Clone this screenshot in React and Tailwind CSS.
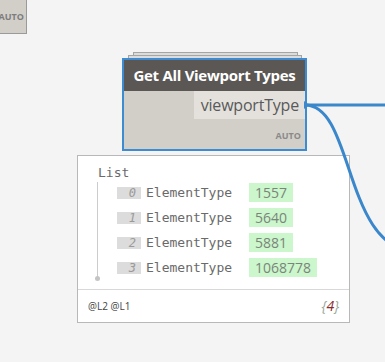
import React from "react";

const rows = [
  { i: "0", v: "1557" },
  { i: "1", v: "5640" },
  { i: "2", v: "5881" },
  { i: "3", v: "1068778" },
];

export default function App() {
  const sans = { fontFamily: '"Open Sans", "Noto Sans", sans-serif' };
  const mono = { fontFamily: '"DejaVu Sans Mono", "Liberation Mono", monospace' };
  return (
    <div className="relative w-[385px] h-[362px] overflow-hidden bg-[#f4f4f4]" style={sans}>
      {/* corner node fragment */}
      <div className="absolute left-[-10px] top-[-10px] w-[37px] h-[44px] bg-[#d2cfc9] border border-[#9a9a9a] flex items-end justify-end pb-[12px] pr-[2px]">
        <span className="text-[9px] font-bold text-[#7d7d7d] leading-none">AUTO</span>
      </div>

      {/* ghost stacked cards */}
      <div className="absolute left-[133px] top-[52px] w-[165px] h-[20px] bg-[#dcdcdc] border border-[#a5a5a5]" />
      <div className="absolute left-[128px] top-[55px] w-[174px] h-[20px] bg-[#dcdcdc] border border-[#a5a5a5]" />

      {/* main node */}
      <div className="absolute left-[122px] top-[58px] w-[185px] h-[93px] border-2 border-[#3d8bd0] bg-[#d2cfc9] flex flex-col">
        <div className="h-[31px] bg-[#5b5754] flex items-center justify-center">
          <span className="text-white font-bold text-[15px] leading-none tracking-[-0.3px]">Get All Viewport Types</span>
        </div>
        <div className="flex justify-end">
          <div className="h-[28px] w-[111px] bg-[#e4e1dd] flex items-center justify-end pr-[6px]">
            <span className="text-[16px] text-[#595959] leading-none tracking-[-0.2px]">viewportType</span>
          </div>
        </div>
        <div className="flex-1 flex items-center justify-end pr-[4px] pt-[2px]">
          <span className="text-[9px] font-bold text-[#8a8a8a] leading-none">AUTO</span>
        </div>
      </div>

      {/* preview bubble */}
      <div className="absolute left-[77px] top-[155px] w-[273px] h-[168px] bg-white border border-[#b8b8b8] flex flex-col">
        <div className="h-[133px] pl-[20px] pt-[9px] relative">
          <div className="text-[13px] text-[#6a6a6a] leading-[16px]" style={mono}>List</div>
          <div className="flex">
            <div className="w-[1px] ml-[-1px] mt-[1px] h-[95px] bg-[#cccccc] relative">
              <div className="absolute left-[-2px] bottom-[-4px] w-[5px] h-[5px] rounded-full bg-[#c4c4c4]" />
            </div>
            <div className="flex flex-col pl-[19px] mt-[-1px]">
              {rows.map((r) => (
                <div key={r.i} className="h-[25px] flex items-center">
                  <div className="w-[24px] h-[12px] bg-[#dcdcdc] flex items-center justify-end pr-[5px]">
                    <span className="text-[12px] italic text-[#9a9a9a] leading-none" style={mono}>{r.i}</span>
                  </div>
                  <span className="ml-[5px] w-[103px] text-[13px] text-[#6a6a6a] leading-none" style={mono}>ElementType</span>
                  <div className="h-[19px] bg-[#ccf6cc] px-[6px] flex items-center">
                    <span className="text-[14px] text-[#7a857a] leading-none">{r.v}</span>
                  </div>
                </div>
              ))}
            </div>
          </div>
        </div>
        <div className="flex-1 border-t border-[#d8d8d8] flex items-center justify-between pl-[10px] pr-[10px]">
          <span className="text-[10px] text-[#444] leading-none">@L2 @L1</span>
          <span className="text-[14px] italic leading-none">
            <span className="text-[#9aa89a]">{"{"}</span>
            <span className="text-[#8b2a2a]">4</span>
            <span className="text-[#9aa89a]">{"}"}</span>
          </span>
        </div>
      </div>

      {/* wires */}
      <svg className="absolute left-0 top-0" width="385" height="362" viewBox="0 0 385 362">
        <path d="M305 105 L385 105" stroke="#3a87cb" strokeWidth="3" fill="none" />
        <path d="M305 105 C355 105 343 252 418 252" stroke="#3a87cb" strokeWidth="3" fill="none" />
        <path d="M304 101 L309 105 L304 109 Z" fill="#3a87cb" />
      </svg>
    </div>
  );
}
